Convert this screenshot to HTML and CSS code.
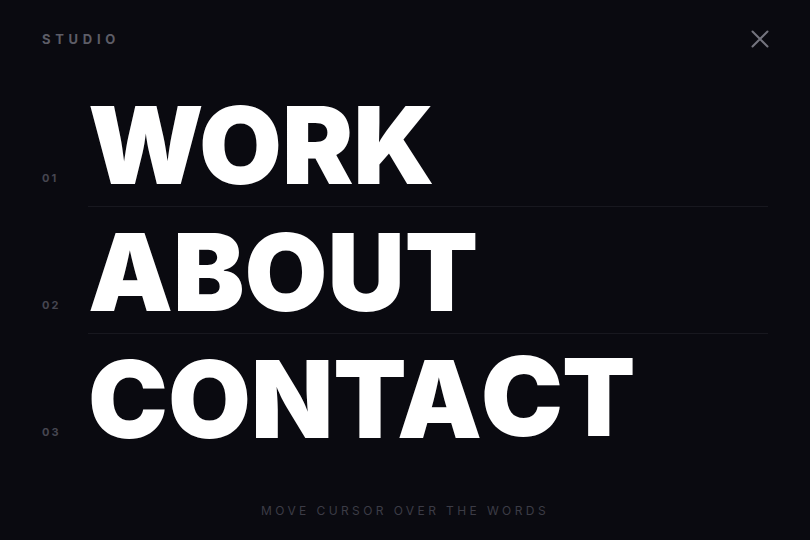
FILE: index.html
```html
<!DOCTYPE html>
<html lang="en">
<head>
<meta charset="utf-8">
<title>Studio</title>
<link rel="stylesheet" href="styles.css">
</head>
<body>
<div class="page">
  <header class="header">
    <span class="brand">STUDIO</span>
    <button class="close" aria-label="Close">
      <svg width="18" height="18" viewBox="0 0 18 18"><path d="M1.5 1.5 L16.5 16.5 M16.5 1.5 L1.5 16.5" stroke="#74747e" stroke-width="2" stroke-linecap="round" fill="none"/></svg>
    </button>
  </header>
  <nav class="menu">
    <a class="row" href="#"><span class="num">01</span><span class="word">WORK</span></a>
    <a class="row" href="#"><span class="num">02</span><span class="word">ABOUT</span></a>
    <a class="row last" href="#"><span class="num">03</span><span class="word">CONTA<span class="lift">C</span><span class="lift2">T</span></span></a>
  </nav>
  <footer class="footer">MOVE CURSOR OVER THE WORDS</footer>
</div>
</body>
</html>
```
FILE: styles.css
```css
html, body {
  margin: 0;
  padding: 0;
  background: #0a0a10;
}
.page {
  width: 810px;
  height: 540px;
  display: flex;
  flex-direction: column;
  font-family: Inter, "Liberation Sans", sans-serif;
  overflow: hidden;
}
.header {
  height: 80px;
  padding: 0 42px;
  box-sizing: border-box;
  display: flex;
  align-items: center;
  justify-content: space-between;
}
.brand {
  font-size: 13px;
  font-weight: 700;
  letter-spacing: 4.7px;
  color: #5d5d67;
  margin-top: -2px;
}
.close {
  background: none;
  border: 0;
  padding: 0;
  width: 18px;
  height: 18px;
  margin-right: -1px;
  margin-top: -2px;
  display: flex;
}
.menu {
  display: flex;
  flex-direction: column;
  padding: 0 42px;
}
.row {
  display: flex;
  align-items: flex-end;
  text-decoration: none;
}
.num {
  width: 46px;
  flex: none;
  font-size: 11px;
  font-weight: 700;
  letter-spacing: 2px;
  color: #464650;
  line-height: 13px;
  padding-bottom: 22px;
}
.word {
  flex: 1;
  font-size: 107px;
  font-weight: 900;
  line-height: 107px;
  letter-spacing: 0;
  color: #ffffff;
  padding: 12px 0 7px;
  border-bottom: 1px solid #18181f;
  white-space: nowrap;
}
.last .word {
  border-bottom-color: transparent;
}
.lift {
  display: inline-block;
  transform: translateY(-3px) scale(1.03);
}
.lift2 {
  display: inline-block;
  transform: translateY(-2px);
}
.footer {
  margin-top: auto;
  padding-bottom: 22px;
  text-align: center;
  font-size: 12px;
  letter-spacing: 3.4px;
  color: #3c3c46;
}
```
